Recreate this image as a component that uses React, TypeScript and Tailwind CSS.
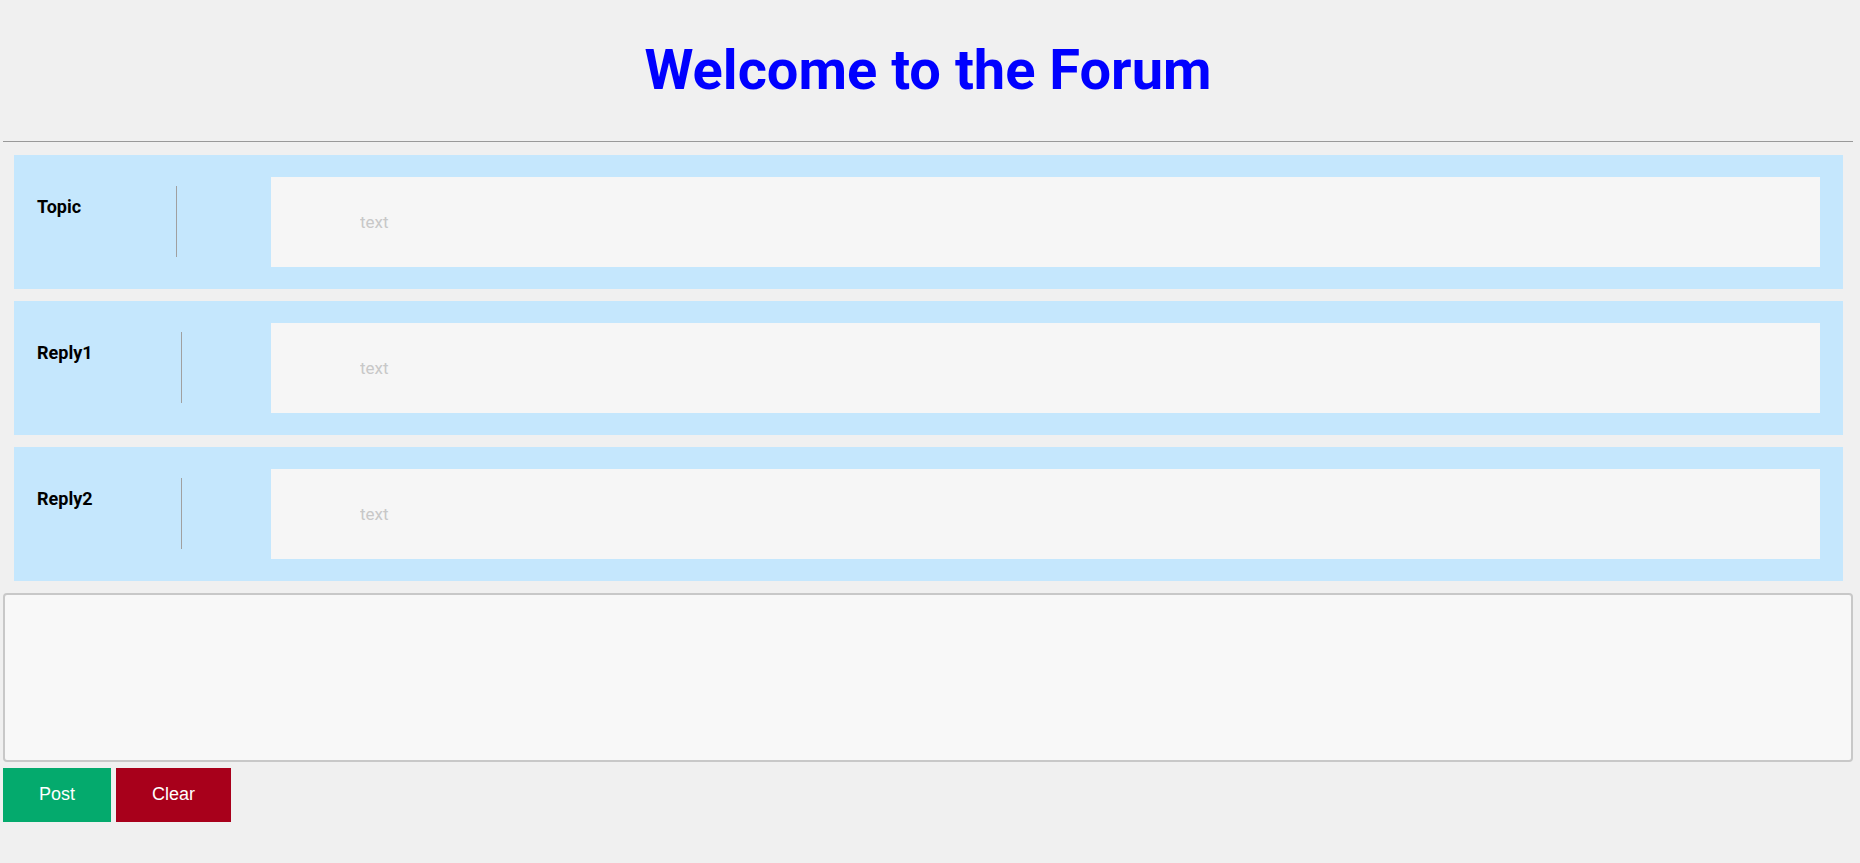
import React from 'react';

interface ForumRow {
  label: string;
  labelWidth: string;
}

const rows: ForumRow[] = [
  { label: 'Topic', labelWidth: 'w-[162px]' },
  { label: 'Reply1', labelWidth: 'w-[167px]' },
  { label: 'Reply2', labelWidth: 'w-[167px]' },
];

const Row: React.FC<{ row: ForumRow }> = ({ row }) => (
  <div className="flex h-[134px] ml-[11px] mr-[10px] bg-[#c5e7fd]">
    <div className={`${row.labelWidth} shrink-0 pl-[23px] pt-[38px]`}>
      <span className="text-[18px] font-bold text-black">{row.label}</span>
    </div>
    <div className="w-px h-[71px] mt-[31px] bg-[#a0a0a0] shrink-0" />
    <div className="flex-1 flex my-[22px] mr-[23px] ml-auto max-w-[1549px]">
      <input
        type="text"
        placeholder="text"
        className="w-full h-full bg-[#f6f6f6] pl-[89px] text-[17px] text-black placeholder:text-[#c8c8c8] outline-none"
      />
    </div>
  </div>
);

export default function App() {
  return (
    <div className="min-h-[863px] bg-[#f0f0f0] font-['Roboto',sans-serif] pl-[3px] pr-[7px]">
      <h1 className="pt-[38px] text-center text-[56px] font-bold text-[#0000ff] leading-[1.17]">
        Welcome to the Forum
      </h1>
      <div className="mt-[37px] border-t border-[#999999]" />
      <div className="mt-[13px] flex flex-col gap-[12px]">
        {rows.map(row => (
          <Row key={row.label} row={row} />
        ))}
      </div>
      <textarea className="block mt-[12px] w-full h-[169px] bg-[#f8f8f8] border-2 border-[#c8c8c8] rounded-[4px] resize-none outline-none" />
      <div className="mt-[6px] flex gap-[5px] font-['Liberation_Sans',Arial,sans-serif] text-[18px] text-white">
        <button className="h-[54px] px-9 bg-[#04aa6d]">Post</button>
        <button className="h-[54px] px-9 bg-[#a8001b]">Clear</button>
      </div>
    </div>
  );
}
